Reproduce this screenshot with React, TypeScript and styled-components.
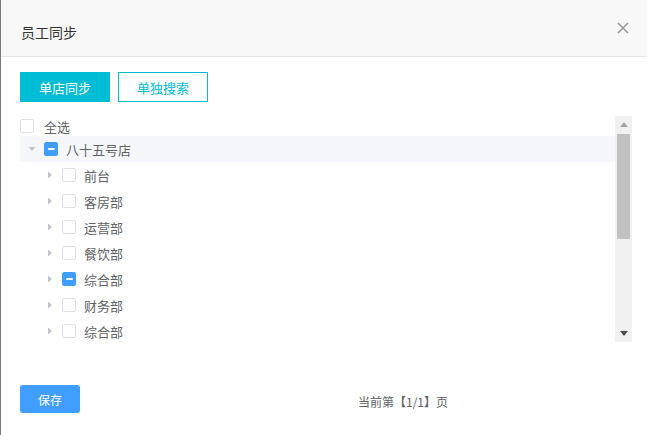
import React from "react";
import styled, { createGlobalStyle } from "styled-components";

const Global = createGlobalStyle`
  html, body { margin: 0; padding: 0; background: #fff; }
  body { font-family: "Noto Sans CJK SC", "Noto Sans", sans-serif; }
`;

const Dialog = styled.div`
  width: 647px;
  height: 435px;
  box-sizing: border-box;
  border-left: 1px solid #7a7a7a;
  background: #fff;
  display: flex;
  flex-direction: column;
  overflow: hidden;
`;

const Header = styled.div`
  height: 57px;
  background: #f8f8f8;
  border-bottom: 1px solid #e6e6e6;
  display: flex;
  align-items: center;
  justify-content: space-between;
  padding: 7px 18px 0 20px;
  box-sizing: border-box;
  flex-shrink: 0;
`;

const Title = styled.div`
  font-size: 14px;
  color: #333;
`;

const Close = styled.button`
  border: none;
  background: none;
  padding: 0;
  width: 12px;
  height: 12px;
  margin-top: -8px;
  display: flex;
  cursor: pointer;
`;

const Body = styled.div`
  padding: 15px 15px 0 19px;
  display: flex;
  flex-direction: column;
`;

const Toolbar = styled.div`
  display: flex;
  gap: 8px;
`;

const ActionButton = styled.button<{ $solid?: boolean }>`
  width: 90px;
  height: 30px;
  box-sizing: border-box;
  font-family: inherit;
  font-size: 13px;
  border: 1px solid #00bcd4;
  background: ${(p) => (p.$solid ? "#00bcd4" : "#fff")};
  color: ${(p) => (p.$solid ? "#fff" : "#00bcd4")};
  padding: 0;
  cursor: pointer;
`;

const TreeBox = styled.div`
  margin-top: 14px;
  height: 226px;
  display: flex;
`;

const TreeList = styled.div`
  flex: 1;
  overflow: hidden;
  display: flex;
  flex-direction: column;
`;

const AllRow = styled.div`
  height: 20px;
  flex-shrink: 0;
  display: flex;
  align-items: center;
  font-size: 13px;
  color: #606266;
`;

const Row = styled.div<{ $level: number; $active?: boolean }>`
  height: 26px;
  flex-shrink: 0;
  display: flex;
  align-items: center;
  padding-left: ${(p) => p.$level * 18}px;
  background: ${(p) => (p.$active ? "#f5f7fa" : "transparent")};
  font-size: 13px;
  color: #606266;
`;

const Caret = styled.span`
  width: 24px;
  height: 26px;
  display: flex;
  align-items: center;
  justify-content: center;
`;

const Box = styled.span<{ $state?: "none" | "half"; $gap: number }>`
  width: 14px;
  height: 14px;
  box-sizing: border-box;
  border-radius: 2px;
  border: 1px solid ${(p) => (p.$state === "half" ? "#409eff" : "#dcdfe6")};
  background: ${(p) => (p.$state === "half" ? "#409eff" : "#fff")};
  margin-right: ${(p) => p.$gap}px;
  display: flex;
  align-items: center;
  justify-content: center;
  flex-shrink: 0;
  &::after {
    content: "";
    display: ${(p) => (p.$state === "half" ? "block" : "none")};
    width: 7px;
    height: 2px;
    border-radius: 1px;
    background: #fff;
  }
`;

const ScrollBar = styled.div`
  width: 17px;
  background: #f1f1f1;
  display: flex;
  flex-direction: column;
  align-items: center;
  flex-shrink: 0;
`;

const ScrollArrow = styled.div`
  height: 17px;
  width: 17px;
  display: flex;
  align-items: center;
  justify-content: center;
  flex-shrink: 0;
`;

const Thumb = styled.div`
  width: 13px;
  height: 105px;
  margin-top: 1px;
  background: #c1c1c1;
  flex-shrink: 0;
`;

const Spacer = styled.div`
  flex: 1;
`;

const Footer = styled.div`
  margin-top: 43px;
  padding-left: 19px;
  display: flex;
  align-items: center;
`;

const SaveButton = styled.button`
  width: 60px;
  height: 28px;
  border: none;
  border-radius: 3px;
  background: #409eff;
  color: #fff;
  font-family: inherit;
  font-size: 12px;
  padding: 0;
  cursor: pointer;
`;

const Pager = styled.div`
  margin-left: 278px;
  margin-top: 5px;
  font-size: 12px;
  color: #606266;
`;

const CaretIcon = ({ down }: { down?: boolean }) => (
  <svg width="8" height="8" viewBox="0 0 8 8">
    {down ? (
      <path d="M0.5 2 L7.5 2 L4 6 Z" fill="#c0c4cc" />
    ) : (
      <path d="M2 0.5 L6 4 L2 7.5 Z" fill="#c0c4cc" />
    )}
  </svg>
);

const children: { name: string; half?: boolean }[] = [
  { name: "前台" },
  { name: "客房部" },
  { name: "运营部" },
  { name: "餐饮部" },
  { name: "综合部", half: true },
  { name: "财务部" },
  { name: "综合部" },
];

export default function App() {
  return (
    <>
      <Global />
      <Dialog>
        <Header>
          <Title>员工同步</Title>
          <Close aria-label="close">
            <svg width="12" height="12" viewBox="0 0 12 12">
              <path d="M1 1 L11 11 M11 1 L1 11" stroke="#999" strokeWidth="1.6" />
            </svg>
          </Close>
        </Header>
        <Body>
          <Toolbar>
            <ActionButton $solid>单店同步</ActionButton>
            <ActionButton>单独搜索</ActionButton>
          </Toolbar>
          <TreeBox>
            <TreeList>
              <AllRow>
                <Box $gap={10} />
                全选
              </AllRow>
              <Row $level={0} $active>
                <Caret>
                  <CaretIcon down />
                </Caret>
                <Box $state="half" $gap={8} />
                八十五号店
              </Row>
              {children.map((c, i) => (
                <Row key={i} $level={1}>
                  <Caret>
                    <CaretIcon />
                  </Caret>
                  <Box $state={c.half ? "half" : "none"} $gap={8} />
                  {c.name}
                </Row>
              ))}
            </TreeList>
            <ScrollBar>
              <ScrollArrow>
                <svg width="8" height="5" viewBox="0 0 8 5">
                  <path d="M0 5 L8 5 L4 0 Z" fill="#a3a3a3" />
                </svg>
              </ScrollArrow>
              <Thumb />
              <Spacer />
              <ScrollArrow>
                <svg width="8" height="5" viewBox="0 0 8 5">
                  <path d="M0 0 L8 0 L4 5 Z" fill="#505050" />
                </svg>
              </ScrollArrow>
            </ScrollBar>
          </TreeBox>
        </Body>
        <Footer>
          <SaveButton>保存</SaveButton>
          <Pager>当前第【1/1】页</Pager>
        </Footer>
      </Dialog>
    </>
  );
}
